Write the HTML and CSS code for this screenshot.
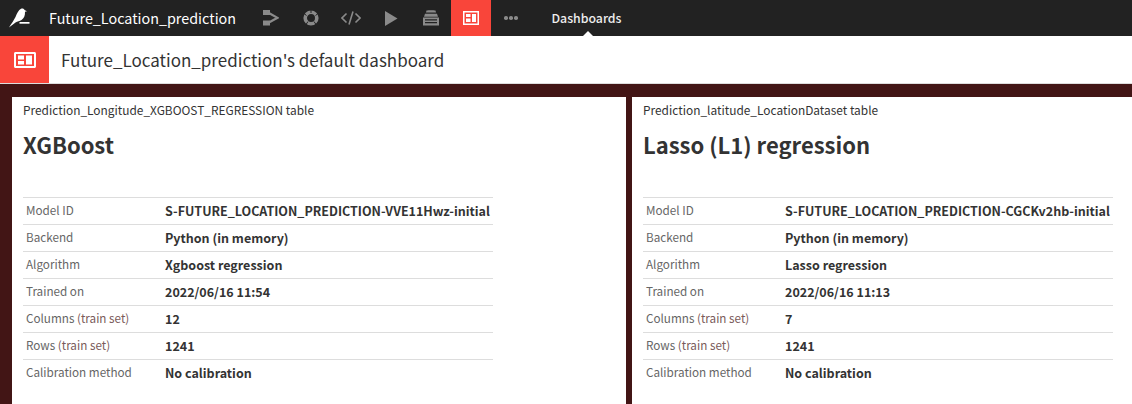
FILE: index.html
```html
<!DOCTYPE html>
<html lang="en">
<head>
    <meta charset="UTF-8">
    <title>Future_Location_prediction's default dashboard</title>
    <link rel="stylesheet" href="styles.css">
</head>
<body>
<nav class="topbar">
    <svg class="logo" width="22" height="20" viewBox="0 0 22 20">
        <path fill="#fff" d="M0 19.500C2.500 15.500 5 12 6.500 9C8 5.500 9.500 2 12 .8C13.500 .1 15 .6 15.500 2L18 3.200L16 3.800C16.200 7.500 15 10.500 12.500 12C10.500 13 8.500 13.200 6.500 14.500C4.500 16 2 18 0 19.500Z"/>
        <path fill="#fff" d="M10.500 14h10v1.700h-10z"/>
    </svg>
    <span class="project-name">Future_Location_prediction</span>
    <svg class="nav-icon flow" width="16" height="16" viewBox="0 0 16 16">
        <path fill="#8a8a8a" d="M0 0h7v5H0zM0 10.500h7v5H0z"/>
        <path stroke="#8a8a8a" stroke-width="2.200" stroke-linecap="round" fill="none" d="M5 2.500L14.500 7.800L5 13"/>
    </svg>
    <svg class="nav-icon lab" width="16" height="16" viewBox="0 0 16 16">
        <circle cx="8" cy="8" r="5.800" fill="none" stroke="#8a8a8a" stroke-width="3.600"/>
        <path stroke="#222" stroke-width="1" d="M8 0v3M1 3.500l2.500 2M15 3.500l-2.500 2M3 14.500l2-3M13 14.500l-2-3"/>
    </svg>
    <svg class="nav-icon code" width="20" height="14" viewBox="0 0 20 14">
        <path fill="none" stroke="#8a8a8a" stroke-width="1.600" d="M5.500 2.500L1 7l4.500 4.500M14.500 2.500L19 7l-4.500 4.500M12 .5L8 13.500"/>
    </svg>
    <svg class="nav-icon run" width="13" height="15" viewBox="0 0 13 15">
        <path fill="#8a8a8a" d="M0 0l12.500 7.500L0 15z"/>
    </svg>
    <svg class="nav-icon deploy" width="16" height="16" viewBox="0 0 16 16">
        <path fill="#8a8a8a" d="M3.500 .5C5 0 11 0 12.500 .5L13 2.500H3zM2 3.800h12l1 3H1zM0 7.500h16V15.500H0z"/>
        <path fill="#222" d="M2 9.200h12v1.200H2zM2 12h12v1.200H2z"/>
    </svg>
    <span class="nav-active">
        <svg width="16" height="14" viewBox="0 0 16 14">
            <path fill="#fff" fill-rule="evenodd" d="M0 0h16v14H0zM1.500 1.500v11h13v-11zM3 3h4.500v3H3zM3 7.500h4.500V11H3zM9 3h4v8H9z"/>
        </svg>
    </span>
    <span class="nav-more"><i></i><i></i><i></i></span>
    <span class="nav-tab">Dashboards</span>
</nav>

<header class="page-head">
    <span class="head-icon">
        <svg width="22" height="16" viewBox="0 0 22 16">
            <path fill="#fff" fill-rule="evenodd" d="M0 1.500C0 .7.700 0 1.500 0h19c.8 0 1.500.7 1.500 1.500v13c0 .8-.7 1.500-1.500 1.500h-19C.7 16 0 15.300 0 14.500zM2 2v12h18V2zM4 3.500h6v4H4zM4 9h6v3.500H4zM12 3.500h6v9h-6z"/>
        </svg>
    </span>
    <h1>Future_Location_prediction's default dashboard</h1>
</header>

<main class="board">
    <section class="tile">
        <div class="tile-source">Prediction_Longitude_XGBOOST_REGRESSION table</div>
        <h2>XGBoost</h2>
        <table class="model-info">
            <tr><th>Model ID</th><td>S-FUTURE_LOCATION_PREDICTION-VVE11Hwz-initial</td></tr>
            <tr><th>Backend</th><td>Python (in memory)</td></tr>
            <tr><th>Algorithm</th><td>Xgboost regression</td></tr>
            <tr><th>Trained on</th><td>2022/06/16 11:54</td></tr>
            <tr><th>Columns <span class="muted">(train set)</span></th><td>12</td></tr>
            <tr><th>Rows <span class="muted">(train set)</span></th><td>1241</td></tr>
            <tr><th>Calibration method</th><td>No calibration</td></tr>
        </table>
    </section>
    <section class="tile">
        <div class="tile-source">Prediction_latitude_LocationDataset table</div>
        <h2>Lasso (L1) regression</h2>
        <table class="model-info">
            <tr><th>Model ID</th><td>S-FUTURE_LOCATION_PREDICTION-CGCKv2hb-initial</td></tr>
            <tr><th>Backend</th><td>Python (in memory)</td></tr>
            <tr><th>Algorithm</th><td>Lasso regression</td></tr>
            <tr><th>Trained on</th><td>2022/06/16 11:13</td></tr>
            <tr><th>Columns <span class="muted">(train set)</span></th><td>7</td></tr>
            <tr><th>Rows <span class="muted">(train set)</span></th><td>1241</td></tr>
            <tr><th>Calibration method</th><td>No calibration</td></tr>
        </table>
    </section>
</main>
</body>
</html>
```

FILE: styles.css
```css
html, body { height: 100%; }
body { margin: 0; overflow: hidden; display: flex; flex-direction: column; background-color: #421515; color: #333; font-family: "Noto Sans CJK SC", "Source Sans Pro", "Open Sans", sans-serif; }

.topbar { height: 36px; flex: none; display: flex; align-items: center; background-color: #222; color: #fff; }
.logo { margin-left: 9px; flex: none; }
.project-name { margin-left: 18px; width: 214px; flex: none; font-size: 14.350px; line-height: 36px; }
.nav-icon { flex: none; }
.lab { margin-left: 24px; }
.code { margin-left: 22px; }
.run { margin-left: 24px; }
.deploy { margin-left: 25px; }
.nav-active { margin-left: 12px; width: 40px; height: 36px; display: flex; align-items: center; justify-content: center; background-color: #f9453a; }
.nav-more { margin-left: 13px; display: flex; gap: 1.500px; }
.nav-more i { width: 3.500px; height: 3.500px; border-radius: 50%; background-color: #8a8a8a; }
.nav-tab { position: relative; margin-left: 34px; font-size: 12.300px; font-weight: 500; line-height: 36px; color: #eee; }
.nav-tab::after { content: ""; position: absolute; left: 50%; bottom: 0; margin-left: -3px; border: 5px solid transparent; border-top: 0; border-bottom-color: #fff; }

.page-head { height: 47px; flex: none; display: flex; align-items: center; background-color: #fff; border-bottom: 1px solid #ddd; }
.head-icon { width: 49px; height: 47px; display: flex; align-items: center; justify-content: center; background-color: #f9453a; }
.page-head h1 { margin: 0 0 0 12px; font-size: 17px; font-weight: 400; line-height: 47px; color: #333; }

.board { flex: 1; display: flex; gap: 6px; padding: 13px 0 0 12px; min-height: 0; }
.tile { background-color: #fff; padding: 5px 11px 0; box-sizing: border-box; }
.tile:first-child { width: 614px; flex: none; }
.tile:last-child { flex: 1; }
.tile-source { font-size: 11.900px; line-height: 16px; color: #333; }
.tile h2 { margin: 11px 0 0; font-size: 22px; font-weight: 700; line-height: 30px; color: #333; }

.model-info { margin-top: 38px; border-collapse: collapse; table-layout: fixed; width: 470px; font-size: 12.500px; border-top: 1px solid #ddd; }
.model-info tr { height: 27px; border-bottom: 1px solid #ddd; }
.model-info tr:last-child { border-bottom: 0; }
.model-info th { width: 136px; padding: 0 0 4px 3px; text-align: left; font-size: 11.700px; font-weight: 400; white-space: nowrap; color: #666; }
.model-info td { padding: 0 0 2px 3px; font-weight: 700; white-space: nowrap; color: #333; }
.muted { color: #7a5a5a; }
```
